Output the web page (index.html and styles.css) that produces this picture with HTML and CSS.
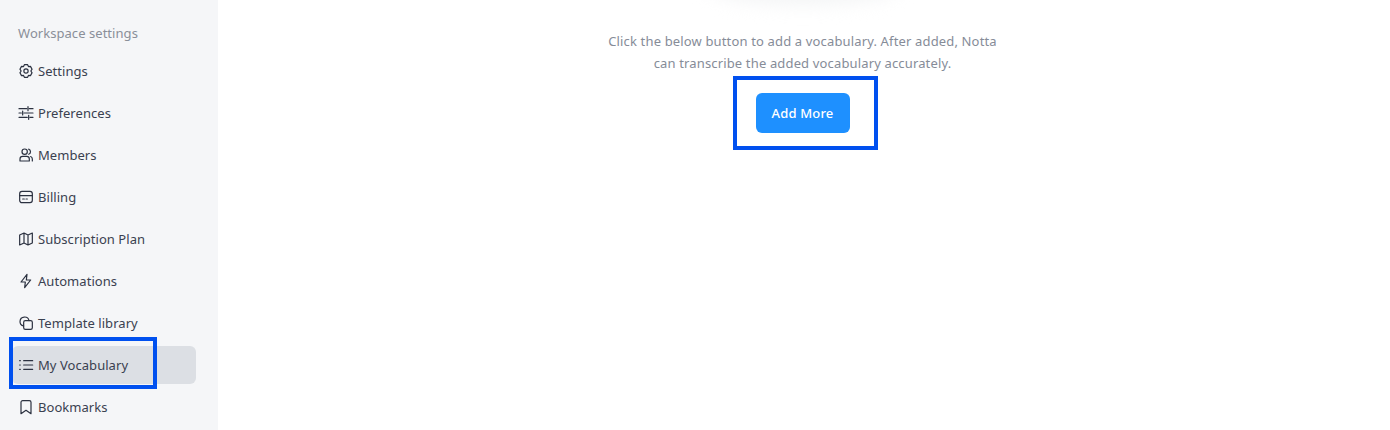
FILE: index.html
```html
<!DOCTYPE html>
<html lang="en">
<head>
  <meta charset="UTF-8" />
  <title>My Vocabulary</title>
  <link rel="stylesheet" href="styles.css">
</head>
<body>

<!-- Sidebar -->
<aside class="sidebar">
  <div class="sidebar-title">Workspace settings</div>
  <nav class="menu">
    <a class="menu-item">
      <svg class="icon" viewBox="0 0 24 24"><path d="M9.600 2.500h4.800l1.300 2.800 3-.3 2.400 4.300-1.800 2.700 1.800 2.700-2.400 4.300-3-.3-1.300 2.800H9.600l-1.300-2.800-3 .3-2.400-4.300L4.700 12 2.900 9.300 5.300 5l3 .3z"/><circle cx="12" cy="12" r="3.200"/></svg>
      Settings
    </a>
    <a class="menu-item">
      <svg class="icon" viewBox="0 0 24 24"><path d="M1.500 5.500H13M17 5.500h5.500M1.500 12H5M9 12h13.500M1.500 18.500H14M18 18.500h4.500M15 2.500v6M7 9v6M16 15.500v6"/></svg>
      Preferences
    </a>
    <a class="menu-item">
      <svg class="icon" viewBox="0 0 24 24"><circle cx="10" cy="7" r="4"/><path d="M3 21v-3a4 4 0 0 1 4-4h6a4 4 0 0 1 4 4v3z"/><path d="M16 3.200a4 4 0 0 1 0 7.600M21.500 21v-3a4 4 0 0 0-2.500-3.700"/></svg>
      Members
    </a>
    <a class="menu-item">
      <svg class="icon" viewBox="0 0 24 24"><rect x="2.500" y="3.500" width="19" height="17" rx="3.500"/><path d="M2.500 10h19M7 15h2.500M12 15h2"/></svg>
      Billing
    </a>
    <a class="menu-item">
      <svg class="icon" viewBox="0 0 24 24"><path d="M2.500 6 9 3l6 3 6.500-3v15L15 21l-6-3-6.500 3zM9 3v15M15 6v15"/></svg>
      Subscription Plan
    </a>
    <a class="menu-item">
      <svg class="icon" viewBox="0 0 24 24"><path d="M13.500 2 4.500 13.500h6.500L10 22l9-11.500h-6.500z"/></svg>
      Automations
    </a>
    <a class="menu-item">
      <svg class="icon" viewBox="0 0 24 24"><path d="M8.500 16.500a6.800 6.800 0 1 1 8-8"/><rect x="8.500" y="8.500" width="13" height="13" rx="2.500"/></svg>
      Template library
    </a>
    <a class="menu-item active">
      <svg class="icon" viewBox="0 0 24 24"><path d="M8.500 5.500H22M8.500 12H22M8.500 18.500H22M2.500 5.500h1M2.500 12h1M2.500 18.500h1"/></svg>
      My Vocabulary
      <span class="mark mark-menu"></span>
    </a>
    <a class="menu-item">
      <svg class="icon" viewBox="0 0 24 24"><path d="M4.500 5A2.500 2.500 0 0 1 7 2.500h10A2.500 2.500 0 0 1 19.500 5v17L12 17l-7.500 5z"/></svg>
      Bookmarks
    </a>
  </nav>
</aside>

<!-- Contenu principal -->
<main class="main-content">
  <div class="empty-glow"></div>
  <p class="empty-text">Click the below button to add a vocabulary. After added, Notta can transcribe the added vocabulary accurately.</p>
  <div class="mark-button">
    <button class="add-btn">Add More</button>
  </div>
</main>

</body>
</html>
```

FILE: styles.css
```css
html, body {
  height: 100%;
}

body {
  margin: 0;
  display: flex;
  overflow: hidden;
  background: #fff;
  font-family: 'Noto Sans', 'Liberation Sans', sans-serif;
  font-size: 13px;
  letter-spacing: 0.15px;
  color: #3a4150;
}

.sidebar {
  width: 218px;
  flex-shrink: 0;
  background: #f5f6f8;
  padding: 25px 22px 0 12px;
  box-sizing: border-box;
  letter-spacing: 0.05px;
}

.sidebar-title {
  color: #8a8f99;
  line-height: 16px;
  padding-left: 6px;
  margin-bottom: 11px;
}

.menu {
  display: flex;
  flex-direction: column;
  gap: 4px;
}

.menu-item {
  position: relative;
  display: flex;
  align-items: center;
  gap: 4px;
  height: 38px;
  padding-left: 6px;
  border-radius: 6px;
}

.menu-item.active {
  background: #dcdfe4;
}

.icon {
  width: 16px;
  height: 16px;
  fill: none;
  stroke: #2b3140;
  stroke-width: 1.800;
  stroke-linecap: round;
  stroke-linejoin: round;
}

/* Encadrés bleus posés sur la capture */
.mark {
  position: absolute;
  border: 4px solid #0050ef;
}

.mark-menu {
  left: -3px;
  top: -9px;
  width: 140px;
  height: 44px;
}

.main-content {
  position: relative;
  flex: 1;
  display: flex;
  flex-direction: column;
  align-items: center;
  padding-top: 30px;
  padding-right: 3px;
  box-sizing: border-box;
}

.empty-glow {
  position: absolute;
  left: 490px;
  top: -30px;
  width: 190px;
  height: 34px;
  border-radius: 50%;
  background: #f3f4f5;
  filter: blur(9px);
}

.empty-text {
  position: relative;
  width: 400px;
  margin: 0;
  text-align: center;
  line-height: 22px;
  color: #868c98;
}

.mark-button {
  box-sizing: border-box;
  width: 145px;
  height: 74px;
  margin-top: 2px;
  margin-left: 5px;
  border: 4px solid #0050ef;
  display: flex;
  align-items: center;
  justify-content: center;
}

.add-btn {
  width: 94px;
  height: 40px;
  margin-right: 5px;
  padding: 0;
  border: none;
  border-radius: 6px;
  background: #1e90ff;
  color: #fff;
  font-family: inherit;
  font-size: 13px;
  font-weight: 500;
  letter-spacing: inherit;
}
```
